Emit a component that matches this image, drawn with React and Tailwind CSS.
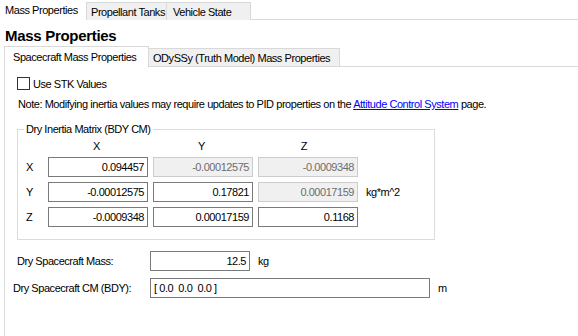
import React from 'react';

const font = { fontFamily: '"Liberation Sans", Arial, sans-serif' };

const Field = ({ value, disabled, className = '' }) => (
  <div
    className={`h-[20px] flex items-center justify-end px-[3px] border ${
      disabled ? 'bg-[#f0f0f0] border-[#cccccc] text-[#6d6d6d]' : 'bg-white border-[#7a7a7a] text-black'
    } ${className}`}
  >
    {value}
  </div>
);

const matrix = [
  ['X', [['0.094457', false], ['-0.00012575', true], ['-0.0009348', true]]],
  ['Y', [['-0.00012575', false], ['0.17821', false], ['0.00017159', true]]],
  ['Z', [['-0.0009348', false], ['0.00017159', false], ['0.1168', false]]],
];

export default function App() {
  return (
    <div className="w-[578px] h-[336px] bg-white text-[11px] tracking-[-0.45px] leading-[14px] text-black overflow-hidden whitespace-nowrap" style={font}>
      {/* top tabs */}
      <div className="flex h-[20px]">
        <div className="w-[86px] pl-[5px] pt-[3px] bg-white">Mass Properties</div>
        <div className="mt-[2px] w-[81px] border border-b-0 border-[#d9d9d9] bg-[#f0f0f0] pl-[4px] pt-[2px]">Propellant Tanks</div>
        <div className="mt-[2px] w-[84px] border border-l-0 border-b-0 border-[#d9d9d9] bg-[#f0f0f0] pl-[6px] pt-[2px]">Vehicle State</div>
        <div className="flex-1 border-b border-[#d9d9d9]"></div>
      </div>

      <div className="pl-[5px] pt-[7px] text-[15px] tracking-[-0.3px] font-bold leading-[18px]">Mass Properties</div>

      {/* inner tabs */}
      <div className="flex h-[21px] mt-[1px] pl-[4px]">
        <div className="w-[145px] border border-b-0 border-[#d9d9d9] bg-white pl-[8px] pt-[3px]">Spacecraft Mass Properties</div>
        <div className="mt-[2px] w-[191px] border border-l-0 border-[#d9d9d9] bg-[#f0f0f0] pl-[4px] pt-[2px]">ODySSy (Truth Model) Mass Properties</div>
        <div className="flex-1 border-b border-[#d9d9d9]"></div>
      </div>

      <div className="ml-[4px] border-l border-[#d9d9d9] h-[270px] pl-[12px]">
        <div className="flex items-center pt-[9px] h-[24px]">
          <div className="w-[13px] h-[13px] border border-[#333333] bg-white"></div>
          <span className="ml-[3px]">Use STK Values</span>
        </div>
        <div className="mt-[6px] h-[16px] pl-[1px]">
          Note: Modifying inertia values may require updates to PID properties on the{' '}
          <span className="text-[#0000ff] underline">Attitude Control System</span> page.
        </div>

        {/* group box */}
        <div className="relative mt-[16px] w-[418px] h-[111px] border border-[#dcdcdc]">
          <div className="absolute -top-[8px] left-[6px] bg-white px-[2px]">Dry Inertia Matrix (BDY CM)</div>
          <div className="pt-[9px] pl-[26px] flex">
            <div className="w-[105px] text-center">X</div>
            <div className="w-[105px] text-center">Y</div>
            <div className="w-[100px] text-center">Z</div>
          </div>
          <div className="mt-[4px] flex flex-col gap-[5px]">
            {matrix.map(([label, cells]) => (
              <div key={label} className="flex items-center">
                <div className="w-[30px] pl-[8px]">{label}</div>
                <div className="flex gap-[5px]">
                  {cells.map(([v, d], i) => (
                    <Field key={i} value={v} disabled={d} className="w-[100px]" />
                  ))}
                </div>
                {label === 'Y' && <span className="ml-[8px]">kg*m^2</span>}
              </div>
            ))}
          </div>
        </div>

        <div className="flex items-center mt-[11px]">
          <div className="w-[133px]">Dry Spacecraft Mass:</div>
          <Field value="12.5" className="w-[100px]" />
          <span className="ml-[8px]">kg</span>
        </div>
        <div className="flex items-center mt-[7px] -ml-[4px]">
          <div className="w-[137px]">Dry Spacecraft CM (BDY):</div>
          <div className="w-[280px] h-[20px] border border-[#7a7a7a] px-[3px] flex items-center">[ 0.0&nbsp;&nbsp;0.0&nbsp;&nbsp;0.0 ]</div>
          <span className="ml-[8px]">m</span>
        </div>
      </div>
    </div>
  );
}
